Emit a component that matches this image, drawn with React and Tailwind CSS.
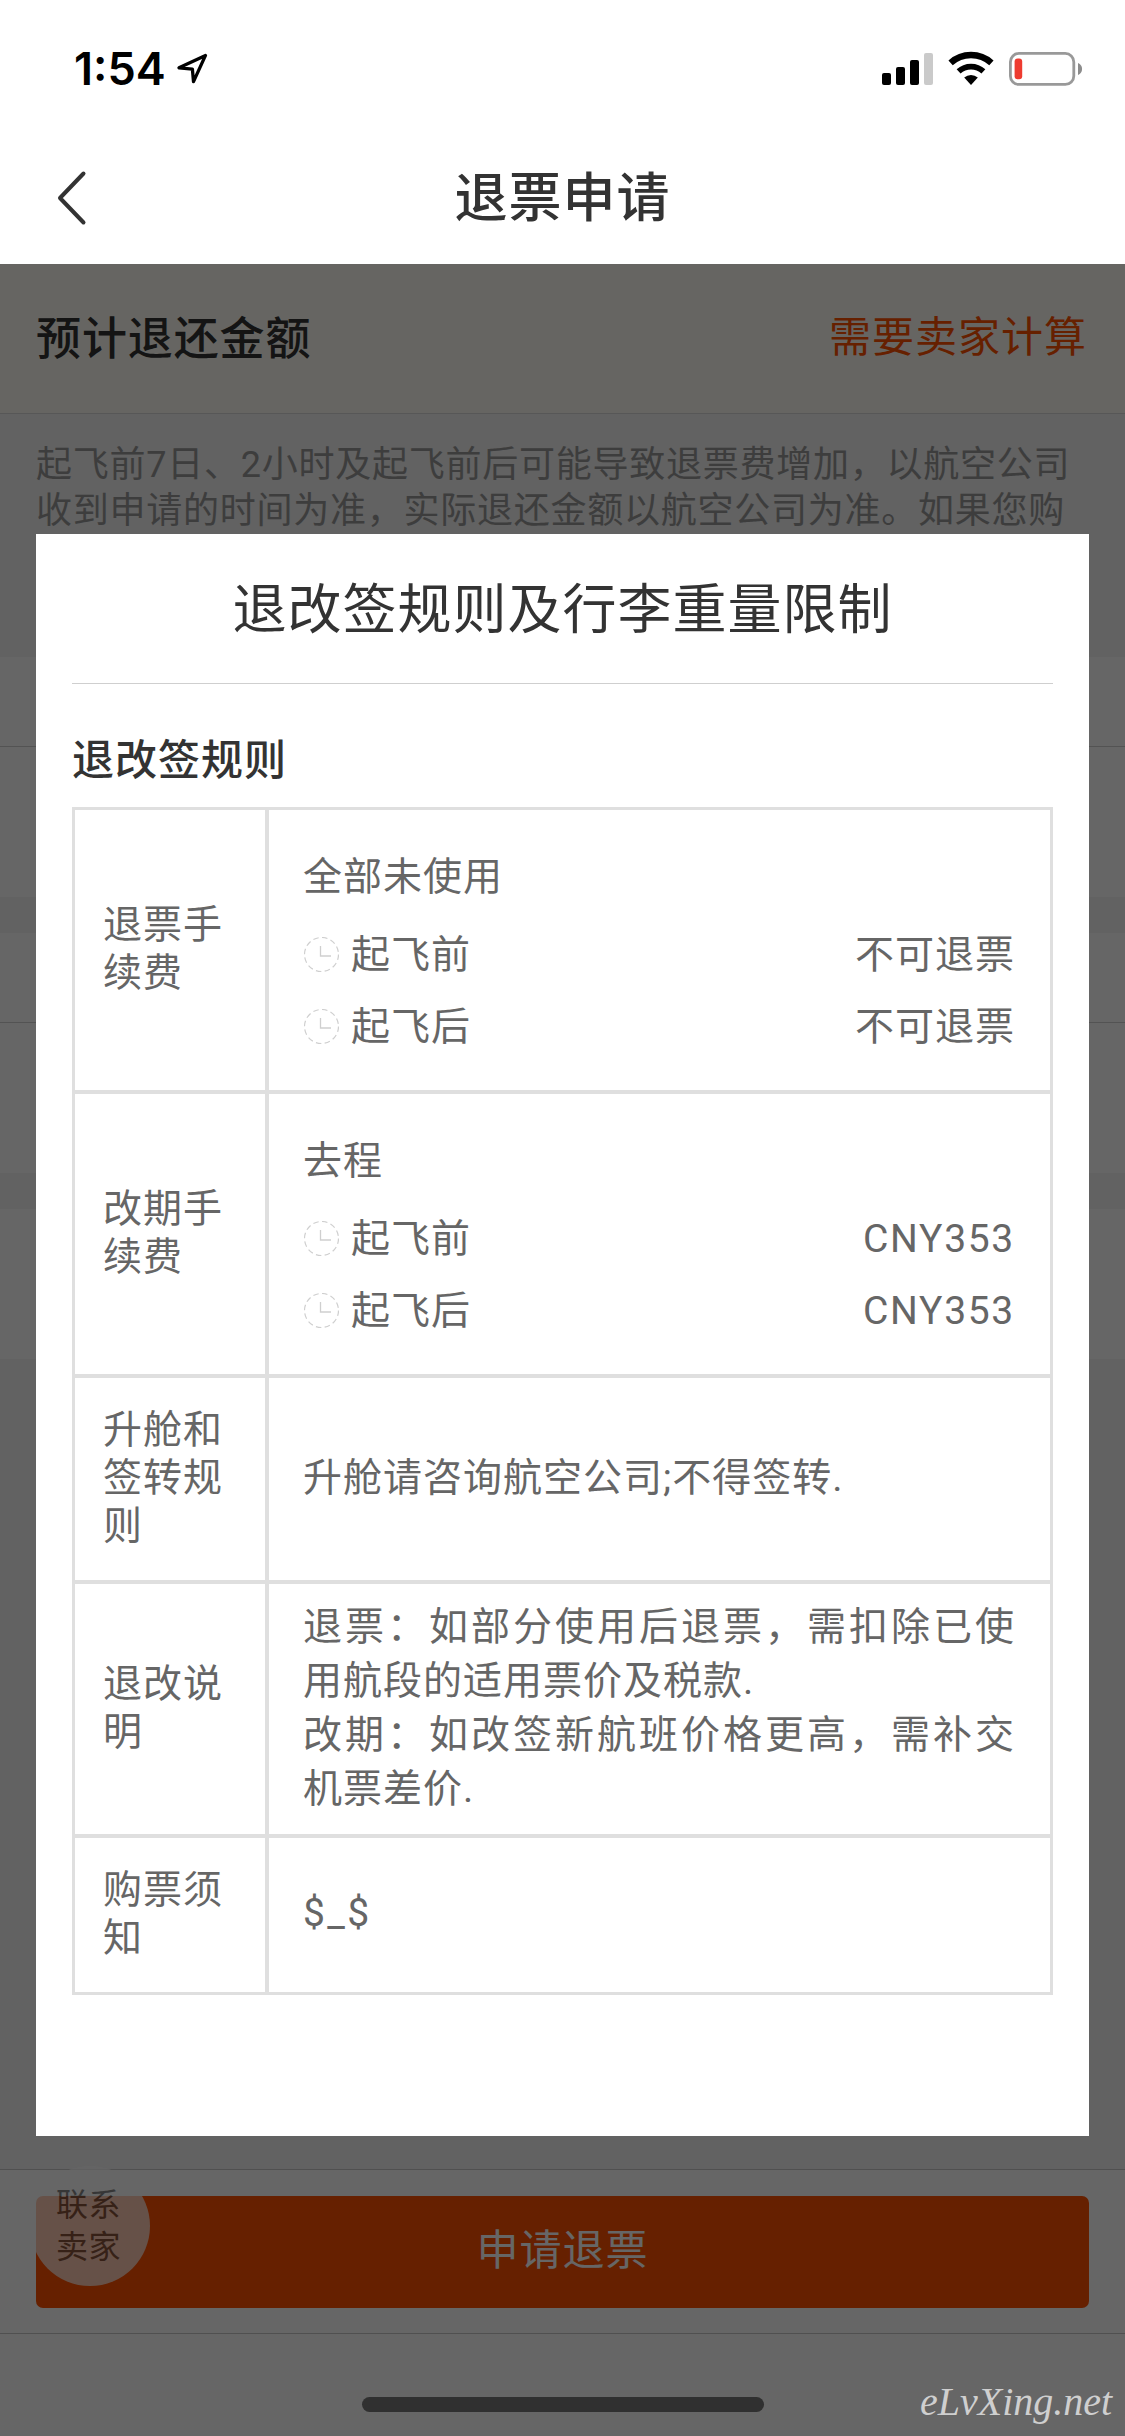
import React from "react";

const feeRows = [
  {
    label: "退票手续费",
    title: "全部未使用",
    items: [
      { when: "起飞前", value: "不可退票" },
      { when: "起飞后", value: "不可退票" },
    ],
  },
  {
    label: "改期手续费",
    title: "去程",
    items: [
      { when: "起飞前", value: "CNY353" },
      { when: "起飞后", value: "CNY353" },
    ],
  },
];

const ClockIcon = () => (
  <svg className="w-9 h-9 shrink-0" viewBox="0 0 36 36" fill="none" stroke="#cfcfcf">
    <circle cx="18.5" cy="17.500" r="17" strokeWidth="1.2" strokeDasharray="5.5 3.4" />
    <path d="M17.5 9v10H28" strokeWidth="1.3" />
  </svg>
);

const StatusBar = () => (
  <div className="flex justify-between h-[132px] pl-[74px] pr-[42px] pt-[49px]">
    <div className="flex">
      <span className="text-[45px] leading-[40px] font-semibold text-black font-['Inter',sans-serif]">
        1:54
      </span>
      <svg className="w-8 h-8 mt-[4px] ml-[10px]" viewBox="0 0 32 32" fill="none">
        <path
          d="M29.5 2.4 3 14.8l13.4 1.4 1.100 12.400z"
          stroke="#000"
          strokeWidth="3.300"
          strokeLinejoin="round"
        />
      </svg>
    </div>

    <svg className="w-[202px] h-9 mt-[2px]" viewBox="0 0 202 36" fill="none">
      {/* signal */}
      <rect x="1" y="22" width="9" height="12" rx="2" fill="#000" />
      <rect x="15" y="16" width="9" height="18" rx="2" fill="#000" />
      <rect x="29" y="9" width="9" height="25" rx="2" fill="#000" />
      <rect x="43" y="2" width="9" height="32" rx="2" fill="#cacaca" />
      {/* wifi */}
      <path d="M69.6 11.8a30.4 30.4 0 0 1 40.8 0" stroke="#000" strokeWidth="6.4" />
      <path d="M77.6 20.4a18.4 18.4 0 0 1 24.8 0" stroke="#000" strokeWidth="5.8" />
      <path d="M83.2 26.6a10.4 10.4 0 0 1 13.6 0L90 34z" fill="#000" />
      {/* battery */}
      <rect x="129.4" y="2.4" width="63.4" height="31" rx="8.5" stroke="#999" strokeWidth="2.8" />
      <rect x="133.6" y="7.6" width="7.6" height="20.6" rx="3" fill="#ee3b30" />
      <path d="M197 12c5.400 1.800 5.400 10.200 0 12z" fill="#8c8c8c" />
    </svg>
  </div>
);

const FeeCell = ({ title, items }) => (
  <div className="bg-white flex flex-col justify-center pl-[34px] pr-[35px] pb-[2px]">
    <p className="leading-[84px]">{title}</p>
    {items.map((item) => (
      <div key={item.when} className="flex items-center h-[72px]">
        <ClockIcon />
        <span className="ml-[12px]">{item.when}</span>
        <span className={`ml-auto ${item.value.startsWith("CNY") ? "tracking-[1.7px]" : ""}`}>
          {item.value}
        </span>
      </div>
    ))}
  </div>
);

const LabelCell = ({ children }) => (
  <div className="bg-white flex items-center pl-[28px] pr-[30px] pb-[2px] leading-[48px]">
    <p>{children}</p>
  </div>
);

const RulesModal = () => (
  <div className="absolute left-[36px] top-[534px] w-[1053px] h-[1602px] bg-white px-[36px]">
    <h2 className="flex items-center justify-center h-[150px] pt-[3px] border-b border-[#cfcfcf] text-[54px] tracking-[1px] text-[#333]">
      退改签规则及行李重量限制
    </h2>
    <h3 className="flex items-center h-[123px] pt-[30px] text-[42px] tracking-[1px] font-medium text-[#333]">
      退改签规则
    </h3>

    {/* rules table, grid gaps are the inner borders */}
    <div className="grid grid-cols-[190px_781px] grid-rows-[280px_280px_202px_250px_154px] gap-1 p-[3px] bg-[#dfdfdf] text-[39px] tracking-[1px] text-[#666]">
      {feeRows.map((row) => (
        <React.Fragment key={row.label}>
          <LabelCell>{row.label}</LabelCell>
          <FeeCell title={row.title} items={row.items} />
        </React.Fragment>
      ))}

      <LabelCell>升舱和签转规则</LabelCell>
      <div className="bg-white flex items-center pl-[34px] pb-[2px]">升舱请咨询航空公司;不得签转.</div>

      <LabelCell>退改说明</LabelCell>
      <div className="bg-white flex items-center pl-[34px] pr-[35px] pb-[2px] leading-[54px] text-justify">
        <p>
          退票：如部分使用后退票，需扣除已使用航段的适用票价及税款.
          <br />
          改期：如改签新航班价格更高，需补交机票差价.
        </p>
      </div>

      <LabelCell>购票须知</LabelCell>
      <div className="bg-white flex items-center pl-[34px] pb-[4px] tracking-[2.4px]">$_$</div>
    </div>
  </div>
);

const App = () => {
  return (
    <div className="relative flex flex-col w-[1125px] h-[2436px] overflow-hidden bg-[#f4f4f4] font-['Roboto','Noto_Sans_CJK_SC',sans-serif]">
      {/* HEADER */}
      <header className="h-[264px] shrink-0 bg-white">
        <StatusBar />
        <div className="relative flex items-center justify-center h-[132px] text-[#333]">
          <svg
            className="absolute left-[55px] top-[38px] w-[32px] h-[56px]"
            viewBox="0 0 32 56"
            fill="none"
            stroke="currentColor"
            strokeWidth="4"
            strokeLinecap="round"
            strokeLinejoin="round"
          >
            <path d="M28.500 3.500 5 28l23.500 24.500" />
          </svg>
          <h1 className="text-[53px] tracking-[1px] font-medium pt-[4px]">退票申请</h1>
        </div>
      </header>

      {/* REFUND AMOUNT */}
      <div className="flex items-center justify-between h-[150px] shrink-0 px-[36px] bg-[#fffdf5] border-b border-[#d9d9d9]">
        <span className="text-[45px] tracking-[0.900px] font-medium text-[#333] pt-[2px]">预计退还金额</span>
        <span className="text-[42px] tracking-[1px] text-[#ff5000] pb-[2px] mr-[2px]">需要卖家计算</span>
      </div>
      <div className="h-[243px] shrink-0 px-[36px] pt-[28px] text-[36px] leading-[46px] tracking-[0.750px] text-[#999]">
        起飞前7日、2小时及起飞前后可能导致退票费增加，以航空公司收到申请的时间为准，实际退还金额以航空公司为准。如果您购
      </div>

      {/* PASSENGER / REASON CARDS */}
      <div className="h-[240px] shrink-0 bg-white">
        <div className="h-[90px] border-b border-[#d0d0d0]" />
      </div>
      <div className="h-[240px] shrink-0 mt-9 bg-white">
        <div className="h-[90px] border-b border-[#d0d0d0]" />
      </div>
      <div className="h-[150px] shrink-0 mt-9 bg-white" />

      {/* SUBMIT BAR */}
      <div className="relative mt-auto h-[267px] shrink-0 bg-white border-t border-[#c8c8c8]">
        <div className="h-[164px] px-[36px] pt-[26px] border-b border-[#c8c8c8]">
          <button className="w-full h-[112px] rounded-[7px] bg-[#ff5000] text-white text-[42px] tracking-[1px] pb-[4px]">
            申请退票
          </button>
        </div>
        <div className="absolute left-[30px] top-[-4px] w-[120px] h-[120px] rounded-full bg-white opacity-70 flex items-center justify-center text-center text-[32px] leading-[42px] tracking-[0.5px] text-[#555] pr-[3px]">
          联系
          <br />
          卖家
        </div>
      </div>

      {/* MASK */}
      <div className="absolute left-0 right-0 top-[264px] bottom-0 bg-black/60" />

      <RulesModal />

      <div className="absolute left-[362px] top-[2397px] w-[402px] h-[15px] rounded-full bg-[#303030]" />
      <div className="absolute left-[920px] top-[2378px] text-[40px] leading-[48px] italic text-[#cfcfcf] font-['Liberation_Serif',serif]">
        eLvXing.net
      </div>
    </div>
  );
};

export default App;
